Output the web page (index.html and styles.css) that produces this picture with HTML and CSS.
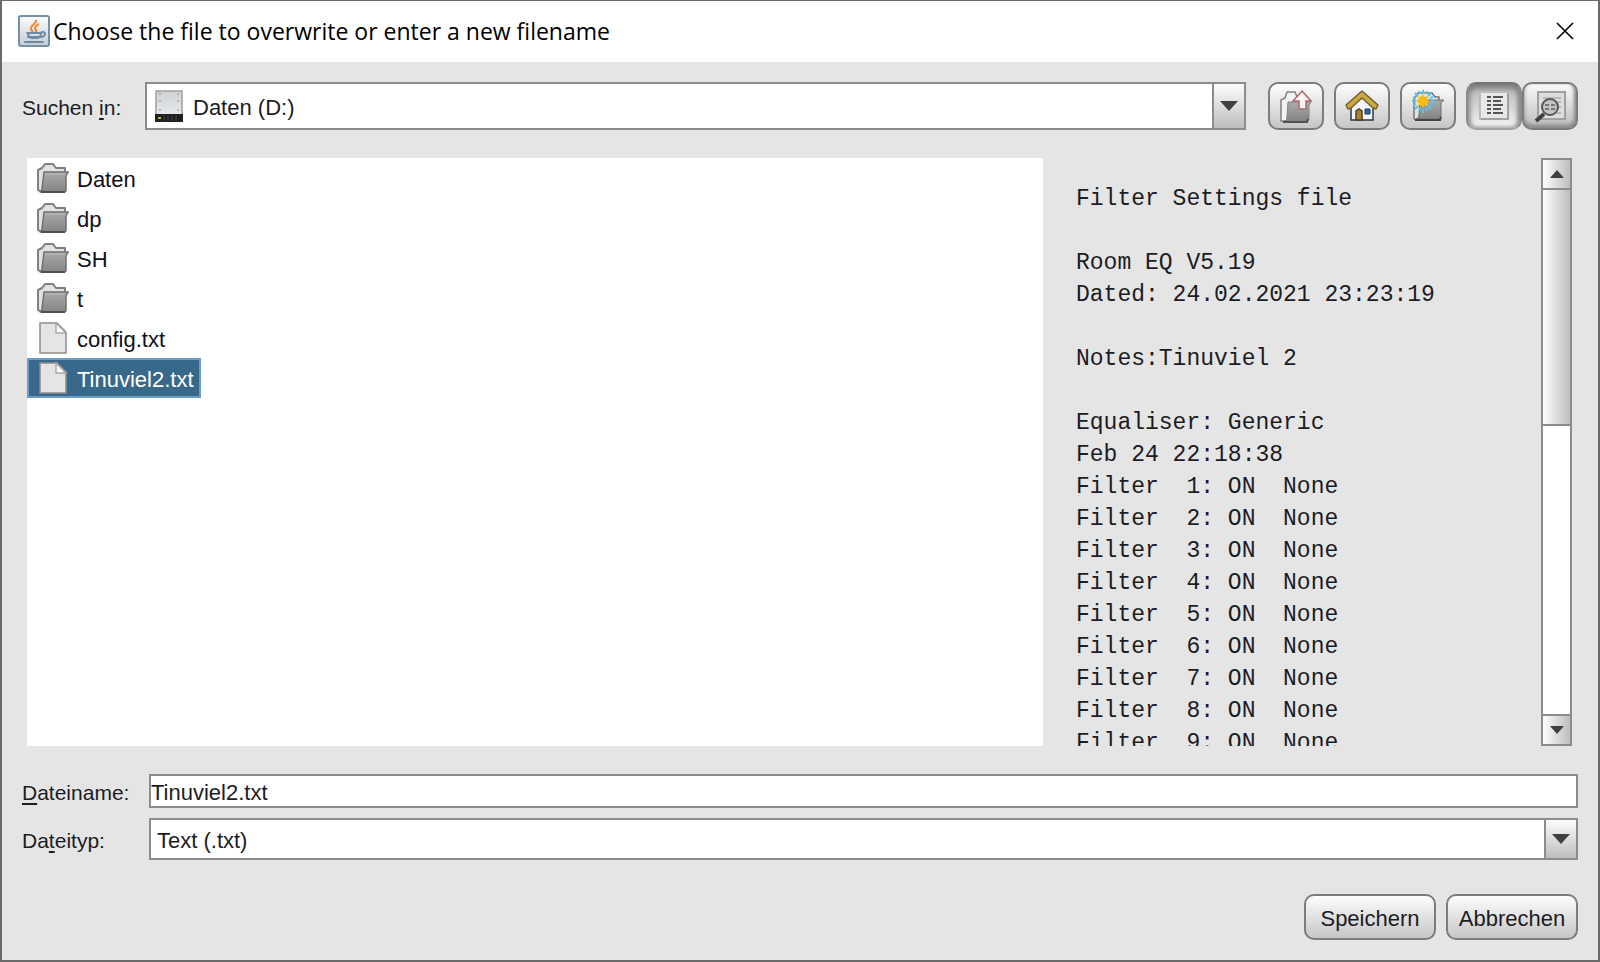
FILE: index.html
```html
<!DOCTYPE html>
<html lang="de">
<head>
    <meta charset="UTF-8">
    <meta name="viewport" content="width=device-width, initial-scale=1.0">
    <title>Choose the file to overwrite or enter a new filename</title>
    <link rel="stylesheet" href="styles.css">
</head>
<body>
    <!-- shared icons -->
    <svg class="defs" width="0" height="0" aria-hidden="true">
        <defs>
            <linearGradient id="g-front" x1="0" y1="0" x2="0" y2="1">
                <stop offset="0" stop-color="#aaa"/>
                <stop offset="1" stop-color="#848484"/>
            </linearGradient>
            <linearGradient id="g-java" x1="0" y1="0" x2="0" y2="1">
                <stop offset="0" stop-color="#fdfdfd"/>
                <stop offset="1" stop-color="#c3ccd6"/>
            </linearGradient>
            <linearGradient id="g-drive" x1="0" y1="0" x2="0" y2="1">
                <stop offset="0" stop-color="#cfd2d4"/>
                <stop offset="1" stop-color="#e8eaec"/>
            </linearGradient>
            <symbol id="folder" viewBox="0 0 32 32">
                <path d="M1 28V8l4-2 3-4h8l3 4h9v5L7 29H3z" fill="#e2e2e2" stroke="#808080" stroke-width="2" stroke-linejoin="round"/>
                <path d="M7 10h24l-2 4v14q0 2-2 2H4q1-1 1-3z" fill="url(#g-front)" stroke="#707070" stroke-width="1.500"/>
                <path d="M4 30h24" stroke="#505050" stroke-width="2"/>
                <path d="M8 12h20" stroke="#bcbcbc"/>
            </symbol>
            <symbol id="file" viewBox="0 0 32 32">
                <path d="M3 1h17l9 9v21H3z" fill="#e5e5e5" stroke="#8c8c8c" stroke-width="1.500"/>
                <path d="M19 1l10 10H19z" fill="#fff" stroke="#a8a8a8" stroke-width="1.500"/>
            </symbol>
        </defs>
    </svg>

    <div class="titlebar">
        <svg class="java" viewBox="0 0 32 32" aria-hidden="true">
            <rect x="1" y="1" width="30" height="30" rx="2" fill="url(#g-java)" stroke="#7890a4" stroke-width="2"/>
            <path d="M18 5c1 4-6 5-5 9 0 1 1 2 2 3M21 9c-4 2-5 4-3 6 1 1 0 2-1 3" fill="none" stroke="#e88b3a" stroke-width="2"/>
            <path d="M9 18h14M10 22h12M7 27h18" stroke="#6d8ba3" stroke-width="2" stroke-linecap="round"/>
            <path d="M10 18q0 5 5 5h3q5 0 5-5M23 17c6-1 5 5-1 5" fill="none" stroke="#6d8ba3" stroke-width="2"/>
        </svg>
        <h1>Choose the file to overwrite or enter a new filename</h1>
        <button type="button" class="close" aria-label="Schließen">
            <svg viewBox="0 0 18 18"><path d="M1 1l16 16M17 1L1 17" stroke="#000" stroke-width="1.600"/></svg>
        </button>
    </div>

    <div class="toolbar">
        <label for="lookin">Suchen <u>i</u>n:</label>
        <div class="combo drive-combo">
            <select id="lookin">
                <option>Daten (D:)</option>
            </select>
            <svg class="drive" viewBox="0 0 28 32" aria-hidden="true">
                <rect x="1" y="1" width="26" height="25" fill="url(#g-drive)" stroke="#a0a0a0" stroke-width="1.500"/>
                <g fill="#aaa"><circle cx="5" cy="4" r="1"/><circle cx="23" cy="4" r="1"/><circle cx="5" cy="11" r="1"/><circle cx="23" cy="11" r="1"/><circle cx="5" cy="20" r="1"/><circle cx="23" cy="20" r="1"/></g>
                <path d="M0 24h28v8H0z" fill="#202020"/>
                <path d="M9 25v6M13 25v6M17 25v6M21 25v6" stroke="#404040"/>
                <path d="M3 27h3v2H3z" fill="#9bd02a"/>
            </svg>
            <span class="arrow"><svg viewBox="0 0 18 10"><path d="M0 0h18L9 10z"/></svg></span>
        </div>
        <div class="tools">
            <button type="button" class="tool" aria-label="Eine Ebene höher">
                <svg viewBox="0 0 34 34">
                    <path d="M2 32V11l4-2 2-6h8l2 5h8L8 32z" fill="#f2f2f2" stroke="#808080" stroke-width="1.500"/>
                    <path d="M9 13h23l-2 3v14q0 2-2 2H6q2-1 2-4z" fill="url(#g-front)" stroke="#808080"/>
                    <path d="M4 33h24l1-3" fill="none" stroke="#505050" stroke-width="2"/>
                    <path d="M23 2l9 10h-5v8h-7v-8h-6z" fill="#fbf4f4" stroke="#a86868" stroke-width="1.500"/>
                </svg>
            </button>
            <button type="button" class="tool" aria-label="Home">
                <svg viewBox="0 0 34 34">
                    <path d="M6 17L17 7l11 10v14H6z" fill="#f4f6fa" stroke="#2a3444" stroke-width="1.500"/>
                    <path d="M17 2l16 14-2 4-3-1L17 9 6 19l-3 1-2-4z" fill="#c9a944" stroke="#74602a" stroke-width="1.500" stroke-linejoin="round"/>
                    <path d="M11 31v-9l3-2 3 2v9z" fill="#a9842e" stroke="#514018" stroke-width="1.500"/>
                    <path d="M20 20h5v5h-5z" fill="#2e67a8" stroke="#173963"/>
                </svg>
            </button>
            <button type="button" class="tool" aria-label="Neuer Ordner">
                <svg viewBox="0 0 34 34">
                    <path d="M3 30V10l4-6h14l3 4h4v5L8 31z" fill="#e4e4e4" stroke="#777" stroke-width="1.500"/>
                    <path d="M9 11h24l-3 3v14q0 2-2 2H5q3-1 3-4z" fill="url(#g-front)" stroke="#707070"/>
                    <path d="M4 31h25l1-3" fill="none" stroke="#444" stroke-width="2"/>
                    <g stroke="#5cc4e8" stroke-width="2"><path d="M12 1v4M12 20v4M1 12h4M20 12h4M4 4l3 3M17 17l3 3M20 4l-3 3M7 17l-3 3M8 2l1 3M16 2l-1 3M2 8l3 1M22 8l-3 1M2 16l3-1M22 16l-3-1M8 22l1-3M16 22l-1-3"/></g>
                    <path d="M12 5l2 3 3-1-1 4 3 1-3 2 1 3-4-1-1 3-2-3-3 1 1-3-3-2 3-2-1-3 3 1z" fill="#f8bd12"/>
                </svg>
            </button>
            <div class="views">
                <button type="button" class="tool pressed" aria-pressed="true" aria-label="Liste">
                    <svg viewBox="0 0 34 34">
                        <path d="M3 3h28v27H3z" fill="#e8e8e8" stroke="#bbb" stroke-width="2"/>
                        <path d="M4 30h27V4" fill="none" stroke="#999" stroke-width="1.500"/>
                        <g stroke="#555" stroke-width="2"><path d="M10 8h4M10 12h4M10 16h4M10 20h4M10 24h4M16 8h10M16 12h8M16 16h10M16 20h8M16 24h10"/></g>
                    </svg>
                </button>
                <button type="button" class="tool raised" aria-pressed="false" aria-label="Details">
                    <svg viewBox="0 0 34 34">
                        <path d="M5 3h27v27H5z" fill="#ddd" stroke="#a0a0a0" stroke-width="2"/>
                        <path d="M10 9h18M24 13h4M25 18h3M24 24h4" stroke="#aaa" stroke-width="1.500"/>
                        <circle cx="17" cy="18" r="8" fill="#c4c4c4" stroke="#555" stroke-width="2"/>
                        <path d="M12 16h4M18 16h4M12 20h4M18 20h4" stroke="#777" stroke-width="2"/>
                        <path d="M11 25l-8 7" stroke="#404040" stroke-width="4"/>
                    </svg>
                </button>
            </div>
        </div>
    </div>

    <div class="content">
        <ul class="files" role="listbox" aria-label="Dateien">
            <li role="option"><svg><use href="#folder"/></svg>Daten</li>
            <li role="option"><svg><use href="#folder"/></svg>dp</li>
            <li role="option"><svg><use href="#folder"/></svg>SH</li>
            <li role="option"><svg><use href="#folder"/></svg>t</li>
            <li role="option"><svg><use href="#file"/></svg>config.txt</li>
            <li role="option" class="selected" aria-selected="true"><svg><use href="#file"/></svg>Tinuviel2.txt</li>
        </ul>

        <pre class="preview">Filter Settings file

Room EQ V5.19
Dated: 24.02.2021 23:23:19

Notes:Tinuviel 2

Equaliser: Generic
Feb 24 22:18:38
Filter  1: ON  None
Filter  2: ON  None
Filter  3: ON  None
Filter  4: ON  None
Filter  5: ON  None
Filter  6: ON  None
Filter  7: ON  None
Filter  8: ON  None
Filter  9: ON  None</pre>

        <div class="scrollbar">
            <button type="button" aria-label="Nach oben"><svg viewBox="0 0 14 8"><path d="M0 8h14L7 0z"/></svg></button>
            <div class="track"><div class="thumb"></div></div>
            <button type="button" aria-label="Nach unten"><svg viewBox="0 0 14 8"><path d="M0 0h14L7 8z"/></svg></button>
        </div>
    </div>

    <form class="fields">
        <label for="filename"><u>D</u>ateiname:</label>
        <input type="text" id="filename" value="Tinuviel2.txt">

        <label for="filetype">Da<u>t</u>eityp:</label>
        <div class="combo type-combo">
            <select id="filetype">
                <option>Text (.txt)</option>
            </select>
            <span class="arrow"><svg viewBox="0 0 18 10"><path d="M0 0h18L9 10z"/></svg></span>
        </div>

        <div class="actions">
            <button type="button">Speichern</button>
            <button type="button">Abbrechen</button>
        </div>
    </form>
</body>
</html>
```
FILE: styles.css
```css
* {
    box-sizing: border-box;
}

body {
    display: flex;
    flex-direction: column;
    height: 100vh;
    margin: 0;
    border: 2px solid #6a6a6a;
    border-top-width: 1px;
    background-color: #e5e5e5;
    color: #1c1c24;
    font-family: "Liberation Sans", Arial, sans-serif;
    font-size: 22px;
    overflow: hidden;
}

button, input, select {
    font: inherit;
    color: inherit;
    margin: 0;
}

svg {
    display: block;
    flex: none;
}

.defs {
    position: absolute;
}

label {
    padding-top: 3px;
    font-size: 21px;
}

u {
    text-underline-offset: 3px;
    text-decoration-thickness: 2px;
}

/* title bar */
.titlebar {
    display: flex;
    align-items: center;
    flex: none;
    height: 61px;
    padding: 0 24px 2px 16px;
    background-color: #fff;
}

.titlebar h1 {
    margin: 0 0 0 3px;
    font-family: "Open Sans", "Noto Sans", sans-serif;
    font-size: 23px;
    font-weight: normal;
    color: #000;
}

.java {
    width: 32px;
    height: 32px;
}

.close {
    margin-left: auto;
    padding: 0;
    border: none;
    background: none;
}

.close svg {
    width: 18px;
    height: 18px;
}

/* look-in row */
.toolbar {
    display: flex;
    align-items: center;
    flex: none;
    padding: 20px 20px 0 20px;
}

.toolbar label {
    width: 123px;
}

.combo {
    position: relative;
    flex: 1;
    border: 2px solid #8c8c8c;
    background-color: #fff;
}

.combo select {
    display: block;
    width: 100%;
    height: 100%;
    padding: 3px 40px 0 6px;
    border: none;
    background: none;
    appearance: none;
}

.drive-combo {
    height: 48px;
}

.drive-combo select {
    padding-left: 46px;
}

.drive {
    position: absolute;
    left: 8px;
    top: 6px;
    width: 28px;
    height: 32px;
    pointer-events: none;
}

.arrow {
    position: absolute;
    right: 0;
    top: 0;
    bottom: 0;
    display: flex;
    align-items: center;
    justify-content: center;
    width: 32px;
    border-left: 2px solid #8c8c8c;
    background: linear-gradient(#fdfdfd, #bdbdbd);
    pointer-events: none;
}

.arrow svg {
    width: 18px;
    height: 10px;
    fill: #404040;
}

.tools {
    display: flex;
    gap: 10px;
    margin-left: 22px;
}

.views {
    display: flex;
}

.tool {
    display: flex;
    align-items: center;
    justify-content: center;
    width: 56px;
    height: 48px;
    padding: 0;
    border: 2px solid #7c7c7c;
    border-radius: 10px;
    background: linear-gradient(#fdfdfd, #c6c6c6);
}

.tool svg {
    width: 34px;
    height: 34px;
}

.tool.pressed {
    border-color: #747474 #8c8c8c #a4a4a4;
    background: linear-gradient(#b4b4b4, #f4f4f4);
    box-shadow: inset 0 4px 6px #777, inset 2px 0 4px #aaa, inset -2px 0 4px #999;
}

.tool.raised {
    background: linear-gradient(#fafafa, #bbb);
    box-shadow: inset 0 -3px 4px #888, inset -2px -1px 3px #999;
}

/* file list and preview */
.content {
    display: flex;
    flex: 1;
    min-height: 0;
    padding: 28px 26px 0 25px;
}

.files {
    flex: 0 1 1016px;
    margin: 0;
    padding: 0;
    background-color: #fff;
    list-style: none;
    color: #101018;
}

.files li {
    display: flex;
    align-items: center;
    gap: 8px;
    width: fit-content;
    height: 40px;
    padding: 3px 9px 0 10px;
}

.files svg {
    width: 32px;
    height: 32px;
    margin-bottom: 4px;
}

.files .selected {
    padding: 3px 5px 0 8px;
    border: 2px solid #6d9cc4;
    background-color: #39698a;
    color: #fff;
}

.preview {
    flex: 1;
    margin: 0;
    padding: 25px 0 0 33px;
    overflow: hidden;
    font-family: "Liberation Mono", "Courier New", monospace;
    font-size: 23px;
    line-height: 32px;
}

.scrollbar {
    display: flex;
    flex-direction: column;
    width: 31px;
    border: 2px solid #8c8c8c;
}

.scrollbar button {
    display: flex;
    align-items: center;
    justify-content: center;
    height: 28px;
    padding: 0;
    border: none;
    background: linear-gradient(to right, #fdfdfd, #bdbdbd);
}

.scrollbar button svg {
    width: 14px;
    height: 8px;
    fill: #404040;
}

.track {
    flex: 1;
    border-top: 2px solid #8c8c8c;
    border-bottom: 2px solid #8c8c8c;
    background-color: #fff;
}

.thumb {
    height: 45%;
    border-bottom: 2px solid #8c8c8c;
    background: linear-gradient(to right, #fdfdfd, #bdbdbd);
}

/* file name, type and buttons */
.fields {
    display: grid;
    grid-template-columns: 127px 1fr;
    align-items: center;
    row-gap: 10px;
    flex: none;
    padding: 28px 20px 20px 20px;
}

.fields input {
    height: 34px;
    padding: 3px 0 0;
    border: 2px solid #8c8c8c;
    background-color: #fff;
}

.type-combo {
    height: 42px;
}

.actions {
    grid-column: 1 / -1;
    display: flex;
    justify-content: flex-end;
    gap: 10px;
    margin-top: 24px;
}

.actions button {
    width: 132px;
    height: 46px;
    padding: 3px 0 0;
    border: 2px solid #7c7c7c;
    border-radius: 10px;
    background: linear-gradient(#fdfdfd, #c6c6c6);
}
```
